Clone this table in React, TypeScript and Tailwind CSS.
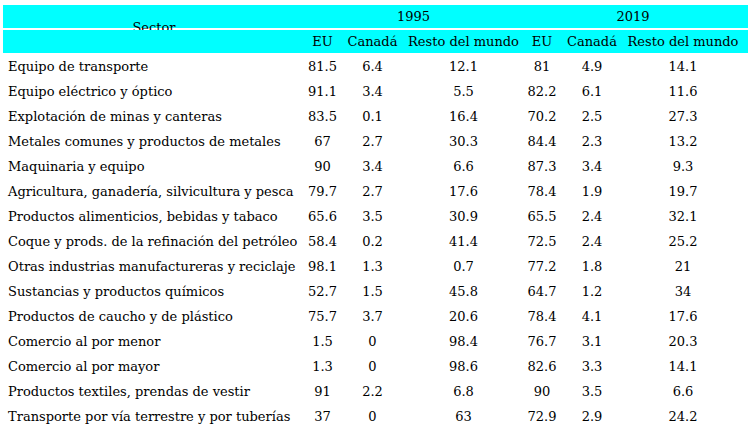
import React from "react";

const rows: [string, string, string, string, string, string, string][] = [
  ["Equipo de transporte", "81.5", "6.4", "12.1", "81", "4.9", "14.1"],
  ["Equipo eléctrico y óptico", "91.1", "3.4", "5.5", "82.2", "6.1", "11.6"],
  ["Explotación de minas y canteras", "83.5", "0.1", "16.4", "70.2", "2.5", "27.3"],
  ["Metales comunes y productos de metales", "67", "2.7", "30.3", "84.4", "2.3", "13.2"],
  ["Maquinaria y equipo", "90", "3.4", "6.6", "87.3", "3.4", "9.3"],
  ["Agricultura, ganadería, silvicultura y pesca", "79.7", "2.7", "17.6", "78.4", "1.9", "19.7"],
  ["Productos alimenticios, bebidas y tabaco", "65.6", "3.5", "30.9", "65.5", "2.4", "32.1"],
  ["Coque y prods. de la refinación del petróleo", "58.4", "0.2", "41.4", "72.5", "2.4", "25.2"],
  ["Otras industrias manufactureras y reciclaje", "98.1", "1.3", "0.7", "77.2", "1.8", "21"],
  ["Sustancias y productos químicos", "52.7", "1.5", "45.8", "64.7", "1.2", "34"],
  ["Productos de caucho y de plástico", "75.7", "3.7", "20.6", "78.4", "4.1", "17.6"],
  ["Comercio al por menor", "1.5", "0", "98.4", "76.7", "3.1", "20.3"],
  ["Comercio al por mayor", "1.3", "0", "98.6", "82.6", "3.3", "14.1"],
  ["Productos textiles, prendas de vestir", "91", "2.2", "6.8", "90", "3.5", "6.6"],
  ["Transporte por vía terrestre y por tuberías", "37", "0", "63", "72.9", "2.9", "24.2"],
];

const grid = "grid grid-cols-[302px_35px_65px_117px_40px_60px_122px]";

export default function App() {
  return (
    <div
      className="w-[748px] h-[433px] bg-white text-black text-[13px] font-light overflow-hidden pt-[5px] pl-[3px]"
      style={{ fontFamily: '"DejaVu Serif", serif' }}
    >
      <div className={`${grid} h-[23px] bg-[#00ffff] items-center`}>
        <div className="relative flex justify-center">
          <span className="relative top-[11px]">Sector</span>
        </div>
        <div className="col-span-3 text-center">1995</div>
        <div className="col-span-3 text-center">2019</div>
      </div>
      <div className={`${grid} relative z-10 mt-[2px] h-[23px] bg-[#00ffff] items-center`}>
        <div></div>
        <div className="text-center whitespace-nowrap">EU</div>
        <div className="text-center whitespace-nowrap">Canadá</div>
        <div className="text-center whitespace-nowrap">Resto del mundo</div>
        <div className="text-center whitespace-nowrap">EU</div>
        <div className="text-center whitespace-nowrap">Canadá</div>
        <div className="text-center whitespace-nowrap">Resto del mundo</div>
      </div>
      <div className="mt-[1px]">
        {rows.map((r) => (
          <div key={r[0]} className={`${grid} h-[25px] items-center`}>
            <div className="pl-[5px] whitespace-nowrap">{r[0]}</div>
            {r.slice(1).map((v, i) => (
              <div key={i} className="text-center">
                {v}
              </div>
            ))}
          </div>
        ))}
      </div>
    </div>
  );
}
